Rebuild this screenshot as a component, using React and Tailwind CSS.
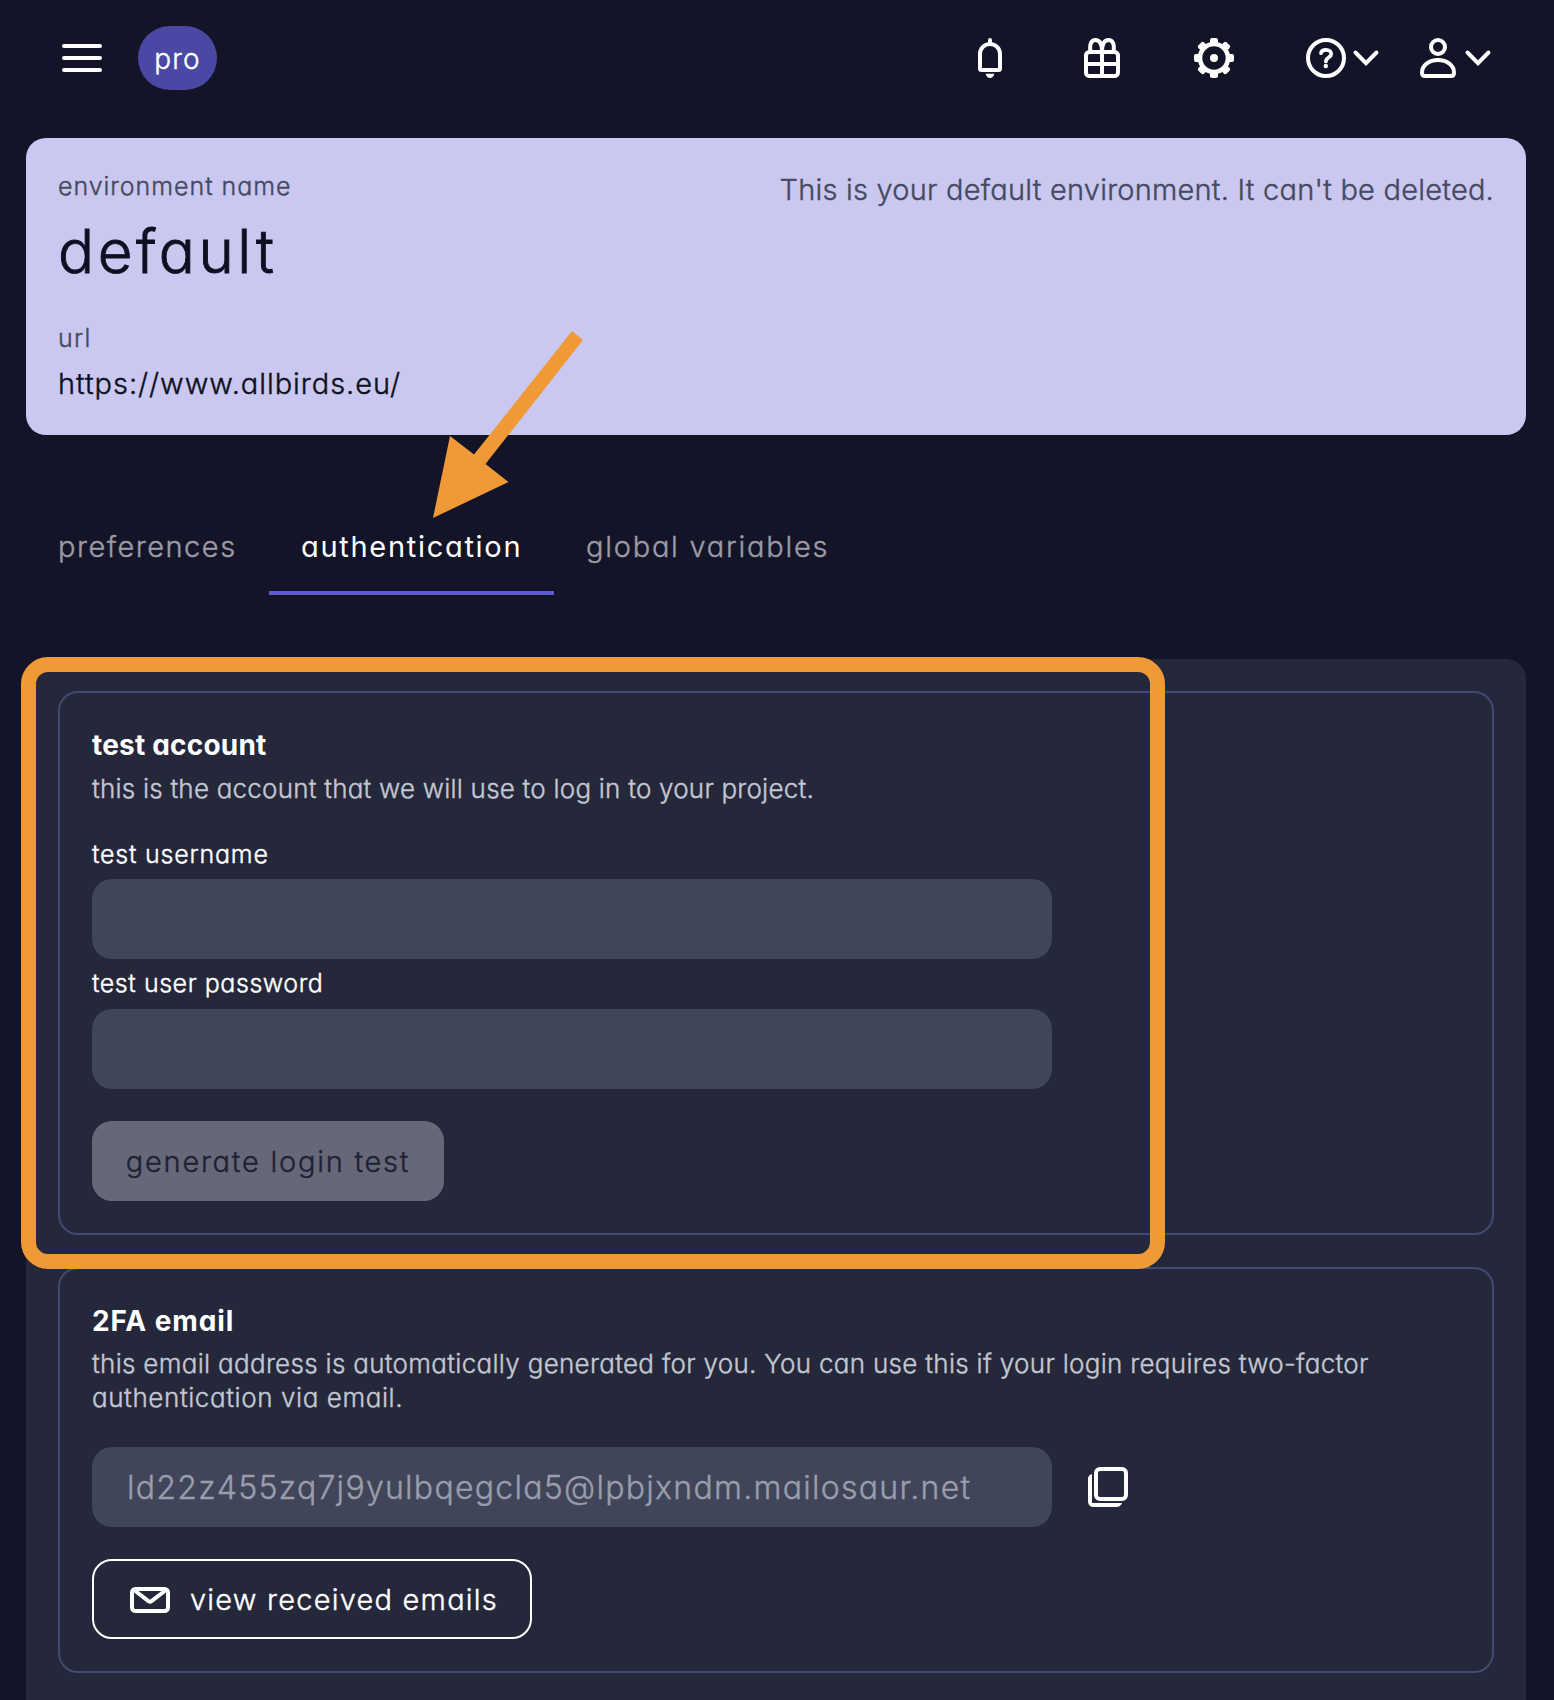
function Chevron() {
  return (
    <svg className="h-10 w-7" viewBox="0 0 28 40" fill="none" stroke="currentColor" strokeWidth="4" strokeLinecap="round">
      <path d="M3.500 14.500 14 25.200 24.500 14.500" />
    </svg>
  );
}

function Bell() {
  return (
    <svg className="size-10" viewBox="0 0 40 40" fill="none" stroke="currentColor" strokeWidth="4">
      <path d="M20 2V6" strokeLinecap="round" />
      <path d="M10 30.500V16a10 10 0 0 1 20 0V30.500a1.500 1.500 0 0 1-1.500 1.500H11.500a1.500 1.500 0 0 1-1.500-1.500z" />
      <path d="M15.700 35.800H24.300C24 38.300 22.300 40 20 40S16 38.300 15.700 35.800z" fill="currentColor" stroke="none" />
    </svg>
  );
}

function Gift() {
  return (
    <svg className="size-10" viewBox="0 0 40 40" fill="none" stroke="currentColor" strokeWidth="4">
      <rect x="4" y="14" width="32" height="24" rx="3.500" />
      <path d="M20 13V38M4 26H36" />
      <path d="M8.500 14C7.200 5.500 9.500 2 13.500 2 18 2 20 7 20 14 20 7 22 2 26.500 2 30.500 2 32.800 5.500 31.500 14" />
    </svg>
  );
}

function Gear() {
  return (
    <svg className="size-10" viewBox="0 0 40 40" fill="none" stroke="currentColor">
      <circle cx="20" cy="20" r="14" strokeWidth="4.600" />
      <circle cx="20" cy="20" r="4" fill="currentColor" stroke="none" />
      {[0, 45, 90, 135, 180, 225, 270, 315].map((a) => (
        <path key={a} d="M16 6V1.800Q16.200 0 18 0H22Q23.800 0 24 1.800V6z" fill="currentColor" stroke="none" transform={`rotate(${a} 20 20)`} />
      ))}
    </svg>
  );
}

function Help() {
  return (
    <svg className="size-10" viewBox="0 0 40 40" fill="none" stroke="currentColor">
      <circle cx="20" cy="20" r="18" strokeWidth="4" />
      <path d="M15 15.200C15.300 13 17.300 11.900 20 11.900 23 11.900 25.200 13.600 25.200 16.100 25.200 19.600 19.900 19.600 19.900 23.400" strokeWidth="3.700" strokeLinecap="round" />
      <circle cx="19.800" cy="28" r="2.200" fill="currentColor" stroke="none" />
    </svg>
  );
}

function User() {
  return (
    <svg className="size-10" viewBox="0 0 40 40" fill="none" stroke="currentColor" strokeWidth="4">
      <circle cx="20" cy="9" r="7" />
      <path d="M4 34.500C4 27.500 11 22 20 22S36 27.500 36 34.500C36 36.600 35 38 33 38H7C5 38 4 36.600 4 34.500z" />
    </svg>
  );
}

function Copy() {
  return (
    <svg className="size-10" viewBox="0 0 40 40" fill="none">
      <rect x="8" y="2" width="30" height="30" rx="4" stroke="currentColor" strokeWidth="4" />
      <path d="M4 7V36H34C33 38.500 31 40 28.500 40H5.500A5.500 5.500 0 0 1 0 34.500V12C0 9.500 1.500 7.800 4 7z" fill="currentColor" />
    </svg>
  );
}

function Envelope() {
  return (
    <svg className="mt-0.5 h-[26px] w-10" viewBox="0 0 40 26" fill="none" stroke="currentColor" strokeWidth="4">
      <rect x="2" y="2" width="36" height="22" rx="3.500" />
      <path d="M4 3 18.500 14.200Q20 15.300 21.500 14.200L36 3" />
    </svg>
  );
}

const field = "h-20 w-[960px] shrink-0 rounded-[20px] bg-[#40455a]";
const card = "flex flex-col items-start rounded-[20px] border-2 border-[#434970] p-8";

export default function App() {
  return (
    <div className="relative flex h-[1700px] w-[1554px] flex-col overflow-hidden bg-[#131428] font-['Inter',sans-serif] font-light whitespace-nowrap text-white [-webkit-text-stroke:0.4px] [font-feature-settings:'cv11']">
      <header className="flex h-[116px] shrink-0 items-center justify-between pr-[62px] pl-[62px]">
        <div className="flex items-center gap-9">
          <div className="flex w-10 flex-col gap-2">
            <span className="h-1 rounded-full bg-white" />
            <span className="h-1 rounded-full bg-white" />
            <span className="h-1 rounded-full bg-white" />
          </div>
          <span className="flex h-16 w-[79px] items-center justify-center rounded-[32px] bg-[#4a48a4] pt-px text-[28px] tracking-[1.2px]">pro</span>
        </div>
        <div className="flex items-center">
          <div className="flex items-center gap-[72px]">
            <Bell />
            <Gift />
            <Gear />
            <div className="flex gap-1.5">
              <Help />
              <Chevron />
            </div>
          </div>
          <div className="ml-[38px] flex gap-1.5">
            <User />
            <Chevron />
          </div>
        </div>
      </header>

      <section className="mx-[26px] mt-[22px] flex h-[297px] w-[1500px] shrink-0 items-start justify-between rounded-[20px] bg-[#cac8f0] px-8 pt-8 text-[#0d1020]">
        <div className="flex flex-col">
          <span className="text-[25px] leading-8 tracking-[0.95px] text-[#454a60]">environment name</span>
          <span className="mt-[15px] text-[60px] leading-[68px] tracking-[3.55px] [-webkit-text-stroke:0.9px]">default</span>
          <span className="mt-[37px] text-[25px] leading-8 tracking-[1.3px] text-[#454a60]">url</span>
          <span className="mt-2.5 text-[29px] leading-10 tracking-[0.95px]">https://www.allbirds.eu/</span>
        </div>
        <span className="text-[29px] leading-10 tracking-[0.22px] text-[#454a60]">This is your default environment. It can't be deleted.</span>
      </section>

      <nav className="mt-[92px] ml-[26px] flex h-[68px] shrink-0 text-[29px] leading-10 text-[#9b9ba5]">
        <span className="w-[243px] px-8 tracking-[1.5px]">preferences</span>
        <span className="w-[285px] border-b-4 border-[#5b5bd0] px-8 font-normal tracking-[1.7px] text-white [-webkit-text-stroke:0px]">authentication</span>
        <span className="px-8 tracking-[1.75px]">global variables</span>
      </nav>

      <main className="mx-[26px] mt-16 flex w-[1500px] grow flex-col gap-8 rounded-t-[20px] bg-[#25273b] p-8">
        <section className={card}>
          <h2 className="text-[28px] leading-10 font-bold tracking-[0.2px] [-webkit-text-stroke:0px]">test account</h2>
          <p className="mt-[7px] text-[26px] leading-[34px] tracking-[0.215px] text-[#c3c7d2]">this is the account that we will use to log in to your project.</p>
          <span className="mt-7 text-[25px] leading-10 tracking-[0.78px]">test username</span>
          <div className={`mt-[5px] ${field}`} />
          <span className="mt-1 text-[25px] leading-10 tracking-[0.55px]">test user password</span>
          <div className={`mt-1.5 ${field}`} />
          <button className="mt-8 flex h-20 w-[352px] items-center justify-center rounded-[20px] bg-[#666878] pt-0.5 text-[29px] tracking-[1.75px] text-[#1f2136]">generate login test</button>
        </section>

        <section className={card}>
          <h2 className="text-[28px] leading-10 font-bold tracking-[0.9px] [-webkit-text-stroke:0px]">2FA email</h2>
          <p className="mt-1.5 text-[26px] leading-[34px] text-[#c3c7d2]">
            <span className="tracking-[0.3px]">this email address is automatically generated for you. You can use this if your login requires two-factor</span>
            <br />
            <span className="tracking-[0.58px]">authentication via email.</span>
          </p>
          <div className="mt-8 flex items-center gap-9">
            <div className={`flex items-center pt-0.5 pl-[35px] text-[32px] tracking-[1.28px] text-[#9a9dab] ${field}`}>ld22z455zq7j9yulbqegcla5@lpbjxndm.mailosaur.net</div>
            <Copy />
          </div>
          <button className="mt-8 flex h-20 w-[440px] items-center rounded-[20px] border-2 border-white pl-9 text-[29px] tracking-[1.22px]">
            <Envelope />
            <span className="pt-0.5 pl-5">view received emails</span>
          </button>
        </section>
      </main>

      <svg className="pointer-events-none absolute top-[331px] left-[433px] h-[187px] w-[150px]" viewBox="0 0 150 187">
        <path d="M0 187 17 105 41 123.500 139 0 150 9 52.500 133 75.500 151z" fill="#f09937" />
      </svg>
      <div className="pointer-events-none absolute top-[657px] left-[21px] h-[612px] w-[1144px] rounded-[27px] border-[15px] border-[#f09937]" />
    </div>
  );
}
